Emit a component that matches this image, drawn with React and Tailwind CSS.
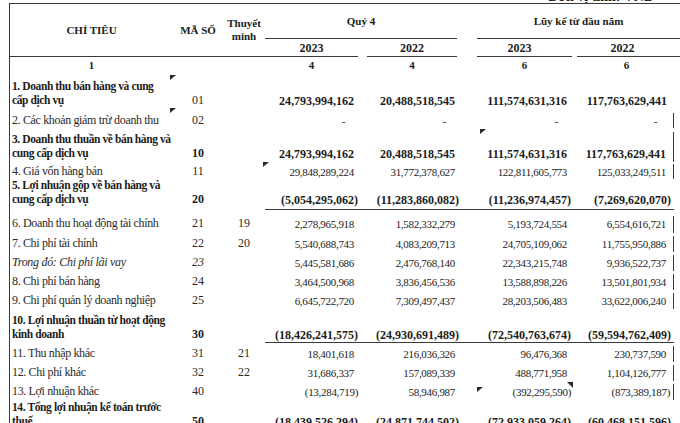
import React from 'react';

const cols = 'grid grid-cols-[163px_50px_42px_95px_100px_112px_102px_6px]';

const rows = [
  { k: 'b', lines: ['1. Doanh thu bán hàng và cung', 'cấp dịch vụ'], code: '01', codeN: true, note: '', v: ['24,793,994,162', '20,488,518,545', '111,574,631,316', '117,763,629,441'], hc: 'h-[34px] pt-[6px]' },
  { k: 'n', lines: ['2. Các khoản giảm trừ doanh thu'], code: '02', note: '', v: ['-', '-', '-', '-'], hc: 'h-[20px] pt-[6px]', rb: true },
  { k: 'b', lines: ['3. Doanh thu thuần về bán hàng và', 'cung cấp dịch vụ'], code: '10', note: '', v: ['24,793,994,162', '20,488,518,545', '111,574,631,316', '117,763,629,441'], hc: 'h-[35px] pt-[5px]', rb: true },
  { k: 'n', lines: ['4. Giá vốn hàng bán'], code: '11', note: '', v: ['29,848,289,224', '31,772,378,627', '122,811,605,773', '125,033,249,511'], hc: 'h-[16px] pt-[2px]', rb: true },
  { k: 'b', lines: ['5. Lợi nhuận gộp về bán hàng và', 'cung cấp dịch vụ'], code: '20', note: '', v: ['(5,054,295,062)', '(11,283,860,082)', '(11,236,974,457)', '(7,269,620,070)'], hc: 'h-[32px] pt-[0px]', ul: true },
  { k: 'n', lines: ['6. Doanh thu hoạt động tài chính'], code: '21', note: '19', v: ['2,278,965,918', '1,582,332,279', '5,193,724,554', '6,554,616,721'], hc: 'h-[23px] pt-[6px]', rb: true },
  { k: 'n', lines: ['7. Chi phí tài chính'], code: '22', note: '20', v: ['5,540,688,743', '4,083,209,713', '24,705,109,062', '11,755,950,886'], hc: 'h-[19px] pt-[3px]', rb: true },
  { k: 'i', lines: ['Trong đó: Chi phí lãi vay'], code: '23', note: '', v: ['5,445,581,686', '2,476,768,140', '22,343,215,748', '9,936,522,737'], hc: 'h-[19px] pt-[3px]', rb: true },
  { k: 'n', lines: ['8. Chi phí bán hàng'], code: '24', note: '', v: ['3,464,500,968', '3,836,456,536', '13,588,898,226', '13,501,801,934'], hc: 'h-[19px] pt-[3px]', rb: true },
  { k: 'n', lines: ['9. Chi phí quản lý doanh nghiệp'], code: '25', note: '', v: ['6,645,722,720', '7,309,497,437', '28,203,506,483', '33,622,006,240'], hc: 'h-[19px] pt-[3px]', rb: true },
  { k: 'b', lines: ['10. Lợi nhuận thuần từ hoạt động', 'kinh doanh'], code: '30', note: '', v: ['(18,426,241,575)', '(24,930,691,489)', '(72,540,763,674)', '(59,594,762,409)'], hc: 'h-[34px] pt-[4px]', ul: true },
  { k: 'n', lines: ['11. Thu nhập khác'], code: '31', note: '21', v: ['18,401,618', '216,036,326', '96,476,368', '230,737,590'], hc: 'h-[19px] pt-[3px]', rb: true },
  { k: 'n', lines: ['12. Chi phí khác'], code: '32', note: '22', v: ['31,686,337', '157,089,339', '488,771,958', '1,104,126,777'], hc: 'h-[19px] pt-[3px]', rb: true },
  { k: 'n', lines: ['13. Lợi nhuận khác'], code: '40', note: '', v: ['(13,284,719)', '58,946,987', '(392,295,590)', '(873,389,187)'], hc: 'h-[19px] pt-[3px]', rb: true },
  { k: 'b', lines: ['14. Tổng lợi nhuận kế toán trước', 'thuế'], code: '50', note: '', v: ['(18,439,526,294)', '(24,871,744,502)', '(72,933,059,264)', '(60,468,151,596)'], hc: 'h-[30px] pt-[0px]' },
];

const valPad = ['pr-[2px]', 'pr-[1px]', 'pr-[1px]', 'pr-[3px]'];

function Value({ text, k }) {
  const neg = text.startsWith('(');
  const dash = text === '-';
  return (
    <div className={dash ? 'mr-[13px]' : neg ? '' : 'mr-[4px]'}>
      <span className={k === 'b' ? 'text-[12px] font-bold' : 'text-[11px] tracking-[-0.3px]'}>{text}</span>
    </div>
  );
}

function Row({ r }) {
  const two = r.lines.length > 1;
  const label =
    r.k === 'b'
      ? 'font-bold text-[11.5px] tracking-[-0.4px] text-[#1c1c1c]'
      : r.k === 'i'
      ? 'italic text-[12px] tracking-[-0.3px] text-[#2a2a2a]'
      : 'text-[12px] tracking-[-0.35px] text-[#2a2a2a]';
  const code =
    r.k === 'b' && !r.codeN
      ? 'font-bold text-[12px] text-[#1c1c1c]'
      : r.k === 'i'
      ? 'italic text-[12px] text-[#2a2a2a]'
      : 'text-[12px] text-[#2a2a2a]';
  return (
    <div className={`${cols} ${r.hc} leading-[14px]`}>
      <div className={`pl-[2px] ${label}`}>
        {r.lines.map((l, i) => (
          <div key={i} className="whitespace-nowrap">{l}</div>
        ))}
      </div>
      <div className={`text-center ${code}`}>
        <div className={two ? 'mt-[14px]' : ''}>{r.code}</div>
      </div>
      <div className="text-center text-[12px] text-[#2a2a2a]">
        <div className={two ? 'mt-[14px]' : ''}>{r.note}</div>
      </div>
      {r.v.map((v, i) => (
        <div
          key={i}
          className={`flex justify-end text-[#1c1c1c] ${valPad[i]} ${r.ul ? 'border-b border-[#3a3a3a]' : ''} ${i === 3 && r.rb ? 'border-r border-[#3a3a3a]' : ''}`}
        >
          <div className={two ? 'mt-[14px]' : ''}>
            <Value text={v} k={r.k} />
          </div>
        </div>
      ))}
      <div />
    </div>
  );
}

function Mark({ pos, flip }) {
  return (
    <svg className={`absolute ${pos}`} width="6" height="6" viewBox="0 0 6 6">
      <polygon points={flip ? '0,0 6,0 6,6' : '0,0 6,0 0,5'} fill="#2a2a2a" />
    </svg>
  );
}

export default function App() {
  return (
    <div className="relative h-[423px] w-[680px] overflow-hidden bg-white font-['Liberation_Serif',serif] text-[#1c1c1c]">
      <div className="flex h-[3px] items-end justify-end overflow-hidden pr-[26px]">
        <span className="text-[14px] font-bold leading-[12px] whitespace-nowrap">Đơn vị tính: VND</span>
      </div>
      <div className="ml-[9px] border-l border-[#3a3a3a]">
        {/* header */}
        <div className={`${cols} grid-rows-[35px_18px] border-t border-[#3a3a3a] text-[12px] font-bold`}>
          <div className="row-span-2 flex items-center justify-center border-b border-[#3a3a3a] text-[11px]">CHỈ TIÊU</div>
          <div className="row-span-2 flex items-center justify-center border-b border-[#3a3a3a] text-[11px]">MÃ SỐ</div>
          <div className="row-span-2 flex flex-col items-center justify-center border-b border-[#3a3a3a] leading-[13px] text-[11px]">
            <span>Thuyết</span>
            <span>minh</span>
          </div>
          <div className="col-span-2 mr-[3px] flex items-center justify-center border-b border-[#3a3a3a] text-[11px]">Quý 4</div>
          <div className="col-span-3 ml-[17px] flex items-center justify-center border-b border-[#3a3a3a] text-[11px]">Lũy kế từ đầu năm</div>
          <div className="mr-[2px] flex items-center justify-center border-b border-[#3a3a3a]">2023</div>
          <div className="ml-[7px] mr-[3px] flex items-center justify-center border-b border-[#3a3a3a]">2022</div>
          <div className="ml-[17px] flex items-center justify-center border-b border-[#3a3a3a] pr-[10px]">2023</div>
          <div className="col-span-2 ml-[5px] flex items-center justify-center border-b border-[#3a3a3a] pr-[12px]">2022</div>
        </div>
        {/* column numbers */}
        <div className={`${cols} h-[16px] items-center text-[11px] font-bold leading-[14px]`}>
          <div className="text-center">1</div>
          <div />
          <div />
          <div className="mr-[2px] text-center">4</div>
          <div className="ml-[7px] mr-[3px] text-center">4</div>
          <div className="ml-[17px] text-center">6</div>
          <div className="col-span-2 ml-[5px] pr-[4px] text-center">6</div>
        </div>
        {rows.map((r, i) => (
          <Row key={i} r={r} />
        ))}
      </div>
      <Mark pos="left-[170px] top-[75px]" />
      <Mark pos="left-[170px] top-[108px]" />
      <Mark pos="left-[263px] top-[162px]" />
      <Mark pos="left-[480px] top-[129px]" />
      <Mark pos="left-[477px] top-[387px]" />
      <Mark pos="left-[567px] top-[382px]" flip />
    </div>
  );
}
